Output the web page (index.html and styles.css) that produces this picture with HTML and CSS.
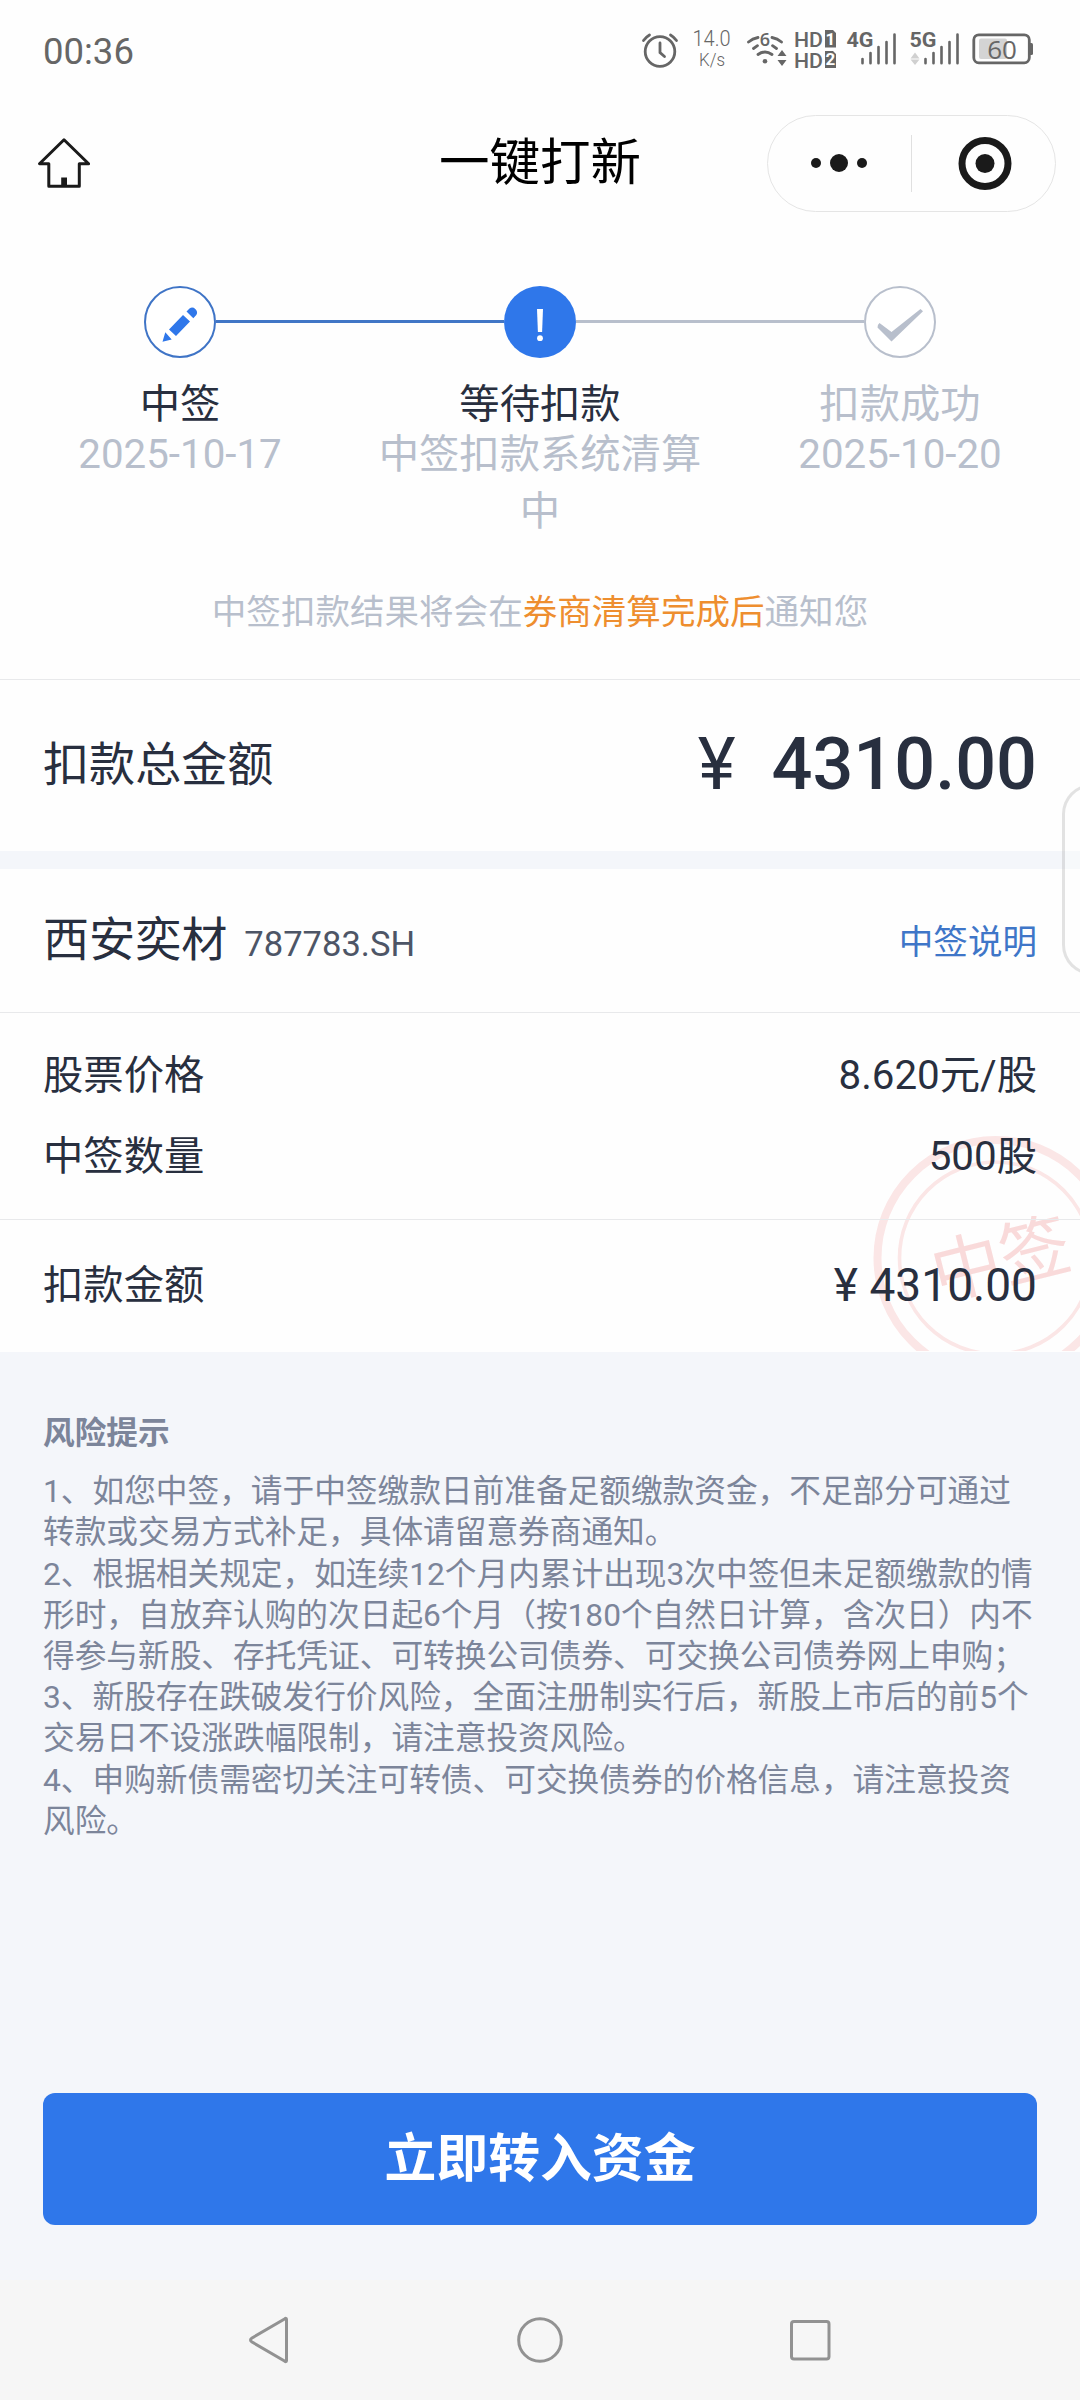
FILE: index.html
```html
<!DOCTYPE html>
<html lang="zh-CN">
<head>
<meta charset="utf-8">
<title>一键打新</title>
<link rel="stylesheet" href="styles.css">
</head>
<body>
<div class="screen">
  <header class="statusbar">
    <span class="clock">00:36</span>
    <svg class="status-icons" viewBox="620 10 460 80" width="460" height="80">
      <g fill="none" stroke="#666" stroke-width="2.8" stroke-linecap="round">
        <circle cx="660" cy="51.5" r="14.8"/>
        <path d="M660 43v9.5l4.5 4M643.500 40.500q2.500-3.500 6-5.500M676.500 40.500q-2.500-3.500-6-5.500"/>
        <path d="M748.500 42q4-3.500 9.500-4.500M781.500 42q-4-3.500-9.500-4.500M753.500 48.500l4-2.800M776.500 48.500l-4-2.800M758 54.500q7-5 14 0"/>
      </g>
      <circle cx="765" cy="61.300" r="2.300" fill="#666"/>
      <text class="t-six" x="765" y="46" text-anchor="middle">6</text>
      <path fill="#666" d="M782 50l4.500 6h-9zM782 66l4.500-6h-9z"/>
      <text class="t-speed" x="692.500" y="45.500" textLength="38" lengthAdjust="spacingAndGlyphs">14.0</text>
      <text class="t-unit" x="699" y="65.500" textLength="26" lengthAdjust="spacingAndGlyphs">K/s</text>
      <text class="t-hd" x="794" y="46.800" textLength="29" lengthAdjust="spacingAndGlyphs">HD</text>
      <text class="t-hd" x="794" y="68" textLength="29" lengthAdjust="spacingAndGlyphs">HD</text>
      <path fill="#666" d="M825 30h8l3 3v14.500h-11zM825 51h8l3 3v14h-11z"/>
      <text class="t-sim" x="830.500" y="44.500" text-anchor="middle">1</text>
      <text class="t-sim" x="830.500" y="65" text-anchor="middle">2</text>
      <text class="t-net" x="846.500" y="46.500" textLength="27" lengthAdjust="spacingAndGlyphs">4G</text>
      <text class="t-net" x="909.500" y="46.500" textLength="27" lengthAdjust="spacingAndGlyphs">5G</text>
      <path stroke="#666" stroke-width="2.600" stroke-linecap="round" d="M862.500 59v4.200M870.500 53v10.200M878.500 47v16.200M886.500 42v21.200M894.500 34.500v28.700M925.500 59v4.200M933.500 53v10.200M941.500 47v16.200M949.500 42v21.200M957.500 34.500v28.700"/>
      <path fill="#d0d0d0" d="M915 52.500l4.500 6h-9zM915 65l4.500-5.500h-9z"/>
      <rect x="979" y="38.500" width="28" height="20.500" rx="2" fill="#d4d4d4"/>
      <rect x="973.800" y="34.800" width="55.500" height="28" rx="5" fill="none" stroke="#666" stroke-width="2.800"/>
      <path fill="#666" d="M1030 43h1.500q1.500 0 1.500 1.500v9q0 1.500-1.500 1.500h-1.500z"/>
      <text class="t-batt" x="1002" y="59" text-anchor="middle">60</text>
    </svg>
  </header>

  <nav class="titlebar">
    <svg class="home" viewBox="36 136 56 54" width="56" height="54">
      <path d="M64 139.800L39.500 163.800h9.300V186.300H79.300V163.800h9.300z" fill="none" stroke="#1a1a1a" stroke-width="3" stroke-linejoin="round"/>
      <path d="M61.200 177.500h5.800v8.500h-5.800z" fill="#1a1a1a"/>
    </svg>
    <h1 class="title">一键打新</h1>
    <div class="capsule">
      <svg viewBox="0 0 143 96" width="143" height="96"><g fill="#1a1a1a"><circle cx="48" cy="48" r="5"/><circle cx="71" cy="48" r="9"/><circle cx="94" cy="48" r="5"/></g></svg>
      <span class="capsule-line"></span>
      <svg viewBox="0 0 143 96" width="143" height="96"><circle cx="74" cy="48.500" r="23" fill="none" stroke="#1a1a1a" stroke-width="7"/><circle cx="74" cy="48.500" r="9.500" fill="#1a1a1a"/></svg>
    </div>
  </nav>

  <section class="progress">
    <div class="steps">
      <div class="step">
        <div class="track">
          <i class="bar blank"></i>
          <svg class="dot" viewBox="144 286 72 72" width="72" height="72">
            <circle cx="180" cy="322" r="35" fill="#fff" stroke="#3f74c6" stroke-width="2"/>
            <g fill="#2f77ea"><path d="M162.500 341.800l2.800-9.600 6.400 7.200zM169 329.500l14-14.500 7 6.500-14 14.500zM186.500 311.500l3-3q3-2.200 5.800.5 3 3 1 6l-3 3.200z"/></g>
          </svg>
          <i class="bar done"></i>
        </div>
        <div class="step-name">中签</div>
        <div class="step-sub">2025-10-17</div>
      </div>
      <div class="step">
        <div class="track">
          <i class="bar done"></i>
          <svg class="dot" viewBox="504 286 72 72" width="72" height="72">
            <circle cx="540" cy="322" r="36" fill="#2f77ea"/>
            <path d="M537 309h6l-.9 23h-4.200z" fill="#fff"/><circle cx="540" cy="338.200" r="2.900" fill="#fff"/>
          </svg>
          <i class="bar todo"></i>
        </div>
        <div class="step-name">等待扣款</div>
        <div class="step-sub">中签扣款系统清算中</div>
      </div>
      <div class="step">
        <div class="track">
          <i class="bar todo"></i>
          <svg class="dot" viewBox="864 286 72 72" width="72" height="72">
            <circle cx="900" cy="322" r="35" fill="#fff" stroke="#b8bfcc" stroke-width="2"/>
            <path d="M877.500 327.500Q876.800 325.500 879.500 323L891.500 332L920.500 309L923 311.200L891.500 341.500Z" fill="#b8bfcc"/>
          </svg>
          <i class="bar blank"></i>
        </div>
        <div class="step-name muted">扣款成功</div>
        <div class="step-sub">2025-10-20</div>
      </div>
    </div>
    <p class="notice">中签扣款结果将会在<span class="hot">券商清算完成后</span>通知您</p>
  </section>

  <section class="total">
    <span class="total-name">扣款总金额</span>
    <span class="total-sum"><span class="yen">¥</span>4310.00</span>
  </section>

  <section class="stock">
    <div class="stock-head">
      <span class="stock-name">西安奕材</span>
      <span class="stock-code">787783.SH</span>
      <a class="stock-link">中签说明</a>
    </div>
    <div class="detail">
      <svg class="stamp" viewBox="870 1130 210 221" width="210" height="221">
        <g fill="none" stroke="#fbe6e6"><circle cx="995.500" cy="1258" r="118" stroke-width="8"/><circle cx="995.500" cy="1258" r="96" stroke-width="3.600"/></g>
        <text class="stamp-text" transform="translate(1000.500 1258) rotate(-14)" x="0" y="26" text-anchor="middle">中签</text>
      </svg>
      <div class="rows">
        <div class="row"><span>股票价格</span><span>8.620元/股</span></div>
        <div class="row"><span>中签数量</span><span>500股</span></div>
      </div>
      <div class="row pay"><span>扣款金额</span><span class="pay-sum">¥ 4310.00</span></div>
    </div>
  </section>

  <section class="risk">
    <h2>风险提示</h2>
    <p>1、如您中签，请于中签缴款日前准备足额缴款资金，不足部分可通过转款或交易方式补足，具体请留意券商通知。</p>
    <p>2、根据相关规定，如连续12个月内累计出现3次中签但未足额缴款的情形时，自放弃认购的次日起6个月（按180个自然日计算，含次日）内不得参与新股、存托凭证、可转换公司债券、可交换公司债券网上申购；</p>
    <p>3、新股存在跌破发行价风险，全面注册制实行后，新股上市后的前5个交易日不设涨跌幅限制，请注意投资风险。</p>
    <p>4、申购新债需密切关注可转债、可交换债券的价格信息，请注意投资风险。</p>
  </section>

  <div class="action"><button class="primary">立即转入资金</button></div>

  <footer class="sysnav">
    <svg viewBox="0 0 60 60" width="60" height="60"><path d="M46.500 9.500V50.500Q46.500 52.500 44.500 51L12 32Q9 30 12 28L44.500 9Q46.500 7.500 46.500 9.500Z"/></svg>
    <svg viewBox="0 0 60 60" width="60" height="60"><circle cx="30" cy="30" r="21.300"/></svg>
    <svg viewBox="0 0 60 60" width="60" height="60"><rect x="11.500" y="11.500" width="37.500" height="37.500" rx="2.500"/></svg>
  </footer>
  <div class="edge-tab"></div>
</div>
</body>
</html>
```
FILE: styles.css
```css
* { box-sizing: border-box; margin: 0; padding: 0; }

body {
  font-family: Roboto, "Noto Sans CJK SC", sans-serif;
  font-size: 40.32px;
  color: #282f3f;
  background: #fff;
  text-spacing-trim: space-all;
}

svg { display: block; flex: none; }

.screen {
  position: relative;
  display: flex;
  flex-direction: column;
  width: 1080px;
  height: 2400px;
  overflow: hidden;
  background: #fefefe;
}

/* Status bar */
.statusbar {
  display: flex;
  justify-content: space-between;
  height: 98px;
  padding: 10px 0 0 43px;
}
.clock { font-size: 36.500px; line-height: 83px; color: #666; }
.status-icons { font-family: "Open Sans", sans-serif; fill: #666; }
.t-speed { font: 300 21.500px Roboto, sans-serif; }
.t-unit { font: 300 18px Roboto, sans-serif; }
.t-six { font: 600 18px "Open Sans", sans-serif; }
.t-hd { font: 500 20.500px Roboto, sans-serif; }
.t-sim { font: 700 17px Roboto, sans-serif; fill: #fff; }
.t-net { font: 700 21px Roboto, sans-serif; }
.t-batt { font-size: 26px; }

/* Title bar */
.titlebar {
  display: grid;
  grid-template-columns: 1fr auto 1fr;
  align-items: center;
  height: 130px;
  padding: 0 24px 0 36px;
}
.title {
  padding-right: 12px;
  font-size: 50.500px;
  line-height: 70px;
  font-weight: 400;
  color: #000;
}
.capsule {
  display: flex;
  align-items: center;
  justify-self: end;
  width: 289px;
  height: 97px;
  border: 1px solid #e5e5e5;
  border-radius: 49px;
}
.capsule-line { width: 1px; height: 57px; background: #e0e0e0; margin-right: -1px; }

/* Progress */
.progress {
  height: 452px;
  padding-top: 58px;
  border-bottom: 1px solid #e8e9eb;
}
.steps { display: grid; grid-template-columns: repeat(3, 1fr); height: 255px; text-align: center; }
.track { display: flex; align-items: center; height: 72px; margin-bottom: 25px; }
.bar { flex: 1; height: 3px; margin-top: -1px; }
.bar.done { background: #4176c6; }
.bar.todo { background: #b8bfcc; }
.step-name { line-height: 43px; }
.step-sub { padding: 0 18px; line-height: 57px; color: #b8bfcc; }
.muted { color: #b8bfcc; }
.notice {
  margin-top: 47px;
  font-size: 34.560px;
  line-height: 48px;
  text-align: center;
  color: #b8bfcc;
}
.hot { color: #ee8e2f; }

/* Total */
.total {
  display: flex;
  justify-content: space-between;
  align-items: center;
  height: 189px;
  padding: 0 43px 2px;
  border-bottom: 18px solid #f4f6fa;
}
.total-name { padding-bottom: 8px; font-size: 46.080px; }
.total-sum { font-size: 72px; line-height: 84px; font-weight: 500; }
.yen { margin-right: 36px; font-weight: 400; }

/* Stock */
.stock-head {
  display: flex;
  align-items: baseline;
  height: 144px;
  padding: 0 43px;
  line-height: 142px;
  border-bottom: 1px solid #e8e9eb;
}
.stock-name { font-size: 46.080px; }
.stock-code { margin-left: 17px; font-size: 34.560px; color: #4d5566; }
.stock-link { align-self: flex-start; margin-left: auto; font-size: 34.560px; line-height: 146px; color: #3f76c8; }
.detail { position: relative; height: 339px; }
.stamp { position: absolute; right: 0; bottom: 1px; }
.stamp-text { font: 400 70px "Noto Sans CJK SC", sans-serif; fill: #f9dada; }
.rows { position: relative; height: 207px; padding-top: 22px; border-bottom: 1px solid #e8e9eb; }
.row {
  position: relative;
  display: flex;
  justify-content: space-between;
  align-items: baseline;
  padding: 0 43px;
  line-height: 81px;
}
.pay { align-items: flex-start; line-height: 131px; }
.pay-sum { font-size: 46.080px; }

/* Risk */
.risk {
  flex: 1;
  padding: 61px 43px 0;
  font-size: 31.680px;
  line-height: 41.180px;
  color: #7c859a;
  background: #f4f6fa;
}
.risk h2 { margin-bottom: 17px; font-size: 31.680px; font-weight: 700; }

/* Action */
.action { height: 187px; padding: 0 43px; background: #f4f6fa; }
.primary {
  width: 100%;
  height: 132px;
  padding-bottom: 10px;
  border: 0;
  border-radius: 12px;
  font: 700 51.840px Roboto, "Noto Sans CJK SC", sans-serif;
  color: #fff;
  background: #2f77ea;
}

/* System navigation */
.sysnav {
  display: flex;
  justify-content: center;
  gap: 210px;
  height: 120px;
  padding-top: 30px;
  background: #f6f6f6;
}
.sysnav svg { fill: none; stroke: #929292; stroke-width: 3; }

/* Floating handle at the screen edge */
.edge-tab {
  position: absolute;
  top: 784px;
  left: 1062px;
  width: 60px;
  height: 191px;
  border: 3px solid rgba(0, 0, 0, 0.11);
  border-radius: 30px;
  background: rgba(255, 255, 255, 0.3);
}
```
